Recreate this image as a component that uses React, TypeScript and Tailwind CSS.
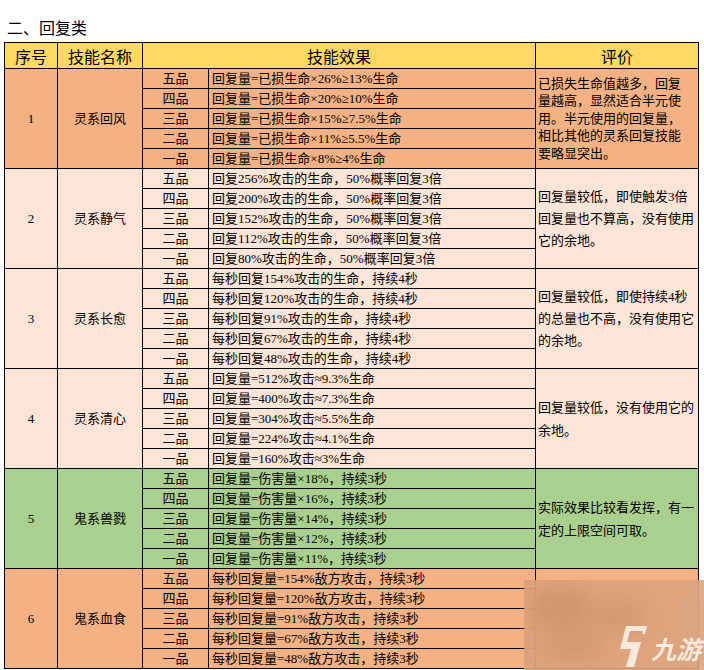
import React from 'react';

interface Group {
  no: string;
  name: string;
  bg: string;
  effects: string[];
  review: string[];
  reviewLeading: string;
}

const grades = ['五品', '四品', '三品', '二品', '一品'];

const groups: Group[] = [
  {
    no: '1',
    name: '灵系回风',
    bg: 'bg-[#f4b183]',
    effects: [
      '回复量=已损生命×26%≥13%生命',
      '回复量=已损生命×20%≥10%生命',
      '回复量=已损生命×15%≥7.5%生命',
      '回复量=已损生命×11%≥5.5%生命',
      '回复量=已损生命×8%≥4%生命',
    ],
    review: ['已损失生命值越多，回复', '量越高，显然适合半元使', '用。半元使用的回复量，', '相比其他的灵系回复技能', '要略显突出。'],
    reviewLeading: 'leading-[17.5px]',
  },
  {
    no: '2',
    name: '灵系静气',
    bg: 'bg-[#fce4d6]',
    effects: [
      '回复256%攻击的生命，50%概率回复3倍',
      '回复200%攻击的生命，50%概率回复3倍',
      '回复152%攻击的生命，50%概率回复3倍',
      '回复112%攻击的生命，50%概率回复3倍',
      '回复80%攻击的生命，50%概率回复3倍',
    ],
    review: ['回复量较低，即使触发3倍', '回复量也不算高，没有使用', '它的余地。'],
    reviewLeading: 'leading-[22px]',
  },
  {
    no: '3',
    name: '灵系长愈',
    bg: 'bg-[#fce4d6]',
    effects: [
      '每秒回复154%攻击的生命，持续4秒',
      '每秒回复120%攻击的生命，持续4秒',
      '每秒回复91%攻击的生命，持续4秒',
      '每秒回复67%攻击的生命，持续4秒',
      '每秒回复48%攻击的生命，持续4秒',
    ],
    review: ['回复量较低，即使持续4秒', '的总量也不高，没有使用它', '的余地。'],
    reviewLeading: 'leading-[22px]',
  },
  {
    no: '4',
    name: '灵系清心',
    bg: 'bg-[#fce4d6]',
    effects: [
      '回复量=512%攻击≈9.3%生命',
      '回复量=400%攻击≈7.3%生命',
      '回复量=304%攻击≈5.5%生命',
      '回复量=224%攻击≈4.1%生命',
      '回复量=160%攻击≈3%生命',
    ],
    review: ['回复量较低，没有使用它的', '余地。'],
    reviewLeading: 'leading-[23px]',
  },
  {
    no: '5',
    name: '鬼系兽戮',
    bg: 'bg-[#a9d08e]',
    effects: [
      '回复量=伤害量×18%，持续3秒',
      '回复量=伤害量×16%，持续3秒',
      '回复量=伤害量×14%，持续3秒',
      '回复量=伤害量×12%，持续3秒',
      '回复量=伤害量×11%，持续3秒',
    ],
    review: ['实际效果比较看发挥，有一', '定的上限空间可取。'],
    reviewLeading: 'leading-[23px]',
  },
  {
    no: '6',
    name: '鬼系血食',
    bg: 'bg-[#f4b183]',
    effects: [
      '每秒回复量=154%敌方攻击，持续3秒',
      '每秒回复量=120%敌方攻击，持续3秒',
      '每秒回复量=91%敌方攻击，持续3秒',
      '每秒回复量=67%敌方攻击，持续3秒',
      '每秒回复量=48%敌方攻击，持续3秒',
    ],
    review: [],
    reviewLeading: 'leading-[22px]',
  },
];

const cell = 'border border-black p-0';

export default function App() {
  return (
    <div className="relative min-h-[670px] w-[704px] overflow-hidden bg-white font-['Liberation_Serif','Noto_Sans_CJK_SC',serif] text-black">
      <h2 className="pl-[7px] pt-[15px] mb-[3px] font-['Noto_Sans_CJK_SC',sans-serif] text-[16px] leading-[24px] font-normal">
        二、回复类
      </h2>

      <table className="ml-[4px] w-[695px] table-fixed border-collapse text-[13px]">
        <colgroup>
          <col className="w-[53px]" />
          <col className="w-[85px]" />
          <col className="w-[66px]" />
          <col className="w-[327px]" />
          <col className="w-[163px]" />
        </colgroup>
        <thead>
          <tr className="h-[26px] bg-[#ffd966] font-['Noto_Sans_CJK_SC',sans-serif] text-[16px]">
            <th className={`${cell} font-normal leading-[24px]`}>序号</th>
            <th className={`${cell} font-normal leading-[24px]`}>技能名称</th>
            <th colSpan={2} className={`${cell} font-normal leading-[24px]`}>技能效果</th>
            <th className={`${cell} font-normal leading-[24px]`}>评价</th>
          </tr>
        </thead>
        <tbody>
          {groups.map((g) =>
            grades.map((grade, i) => (
              <tr key={g.no + grade} className={`h-[20px] ${g.bg}`}>
                {i === 0 && (
                  <>
                    <td rowSpan={5} className={`${cell} text-center align-middle`}>{g.no}</td>
                    <td rowSpan={5} className={`${cell} text-center align-middle`}>{g.name}</td>
                  </>
                )}
                <td className={`${cell} text-center leading-[19px]`}>{grade}</td>
                <td className={`${cell} pl-[3px] leading-[19px] whitespace-nowrap`}>{g.effects[i]}</td>
                {i === 0 && (
                  <td rowSpan={5} className={`${cell} pl-[2px] align-middle ${g.reviewLeading} whitespace-nowrap`}>
                    {g.review.map((line) => (
                      <div key={line}>{line}</div>
                    ))}
                  </td>
                )}
              </tr>
            ))
          )}
        </tbody>
      </table>

      {/* watermark */}
      <div className="absolute left-[524px] top-[580px] h-[90px] w-[180px] overflow-hidden bg-[#d9a27c]/85 backdrop-blur-[12px]">
        <div className="absolute left-[8px] top-[8px] h-[40px] w-[60px] rounded-full bg-[#c08058]/40 blur-[10px]" />
        <div className="absolute left-[70px] top-[20px] h-[30px] w-[50px] rounded-full bg-[#c08058]/35 blur-[10px]" />
        <div className="absolute left-[20px] top-[50px] h-[30px] w-[60px] rounded-full bg-[#c08058]/30 blur-[10px]" />
        <div className="absolute left-[90px] top-[44px] flex items-center gap-[3px]">
          <svg width="34" height="44" viewBox="0 0 34 44" className="opacity-85">
            <path d="M12 2 L33 2 L31 10 L28 10 L29 7 L16 7 L13 18 L27 18 L20 43 L12 43 L17 25 L6 25 Z" fill="#fff5ee" />
          </svg>
          <span className="mt-[4px] font-['Noto_Sans_CJK_SC',sans-serif] text-[25px] leading-none font-bold italic text-[#fff5ee] opacity-85">
            九游
          </span>
        </div>
      </div>
    </div>
  );
}
